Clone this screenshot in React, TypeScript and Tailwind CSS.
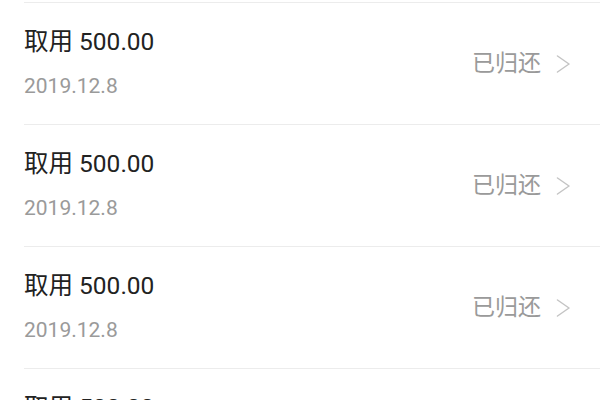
const records = [
  { amount: '500.00', date: '2019.12.8', status: '已归还' },
  { amount: '500.00', date: '2019.12.8', status: '已归还' },
  { amount: '500.00', date: '2019.12.8', status: '已归还' },
  { amount: '500.00', date: '2019.12.8', status: '已归还' },
]

function Chevron() {
  return (
    <svg width="15" height="18" viewBox="0 0 15 18" fill="none" className="text-[#c4c4c4]">
      <polyline points="1.5,1 13,9 1.5,17" stroke="currentColor" strokeWidth="1.5" strokeLinejoin="round" strokeLinecap="round" />
    </svg>
  )
}

export default function App() {
  return (
    <div
      className="h-[400px] w-[600px] overflow-hidden bg-white pt-[2px]"
      style={{ fontFamily: 'Roboto, "Noto Sans CJK SC", sans-serif' }}
    >
      {records.map((r, i) => (
        <div key={i} className="ml-6 flex h-[122px] items-center border-t border-[#ececec] pr-[29px]">
          <div className="flex-1 self-start pt-[22px]">
            <div className="text-[24.5px] leading-[33px] text-[#222]">取用 {r.amount}</div>
            <div className="mt-[14px] text-[21px] leading-[29px] text-[#9a9a9a]">{r.date}</div>
          </div>
          <div className="flex items-center gap-[15px]">
            <span className="text-[23px] leading-[30px] text-[#9a9a9a]">{r.status}</span>
            <Chevron />
          </div>
        </div>
      ))}
    </div>
  )
}
